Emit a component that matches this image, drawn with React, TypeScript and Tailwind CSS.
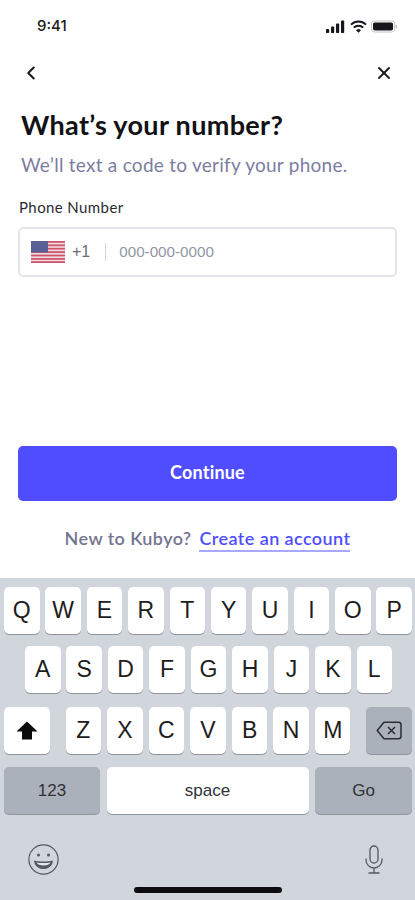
import { ChevronLeft, X } from 'lucide-react';

const ROW_ONE = ['Q', 'W', 'E', 'R', 'T', 'Y', 'U', 'I', 'O', 'P'];
const ROW_TWO = ['A', 'S', 'D', 'F', 'G', 'H', 'J', 'K', 'L'];
const ROW_THREE = ['Z', 'X', 'C', 'V', 'B', 'N', 'M'];

const Key = ({ label }: { label: string }) => (
  <div className="flex h-[47px] w-[35.5px] items-center justify-center rounded-[5px] bg-white text-[23px] text-[#1d1d20] shadow-[0_1px_0_#8f939a]">
    {label}
  </div>
);

const StatusIcons = () => (
  <div className="flex items-center gap-[4px]">
    <svg width="20" height="13" viewBox="0 0 20 13" fill="#16161c">
      <rect x="0" y="9" width="3.2" height="4" rx="0.8" />
      <rect x="5" y="6.5" width="3.2" height="6.5" rx="0.8" />
      <rect x="10" y="3.5" width="3.2" height="9.5" rx="0.8" />
      <rect x="15" y="0.5" width="3.2" height="12.5" rx="0.8" />
    </svg>
    <svg width="17" height="13" viewBox="0 0 17 13" fill="none" stroke="#16161c" strokeWidth="2">
      <path d="M1 4.6a10.6 10.6 0 0 1 15 0" />
      <path d="M3.8 7.6a6.6 6.6 0 0 1 9.4 0" />
      <path d="M8.5 12.4 6.4 10.2a3 3 0 0 1 4.2 0Z" fill="#16161c" strokeWidth="0.6" />
    </svg>
    <svg width="27" height="13" viewBox="0 0 27 13">
      <rect x="0.5" y="1" width="23" height="11" rx="3" fill="none" stroke="#c4c4c8" />
      <rect x="2" y="2.5" width="20" height="8" rx="1.8" fill="#16161c" />
      <rect x="24.5" y="4.7" width="1.5" height="3.6" rx="0.7" fill="#c4c4c8" />
    </svg>
  </div>
);

const UsFlag = () => (
  <svg width="34" height="22" viewBox="0 0 34 22">
    <rect width="34" height="22" fill="#f0dde1" />
    {[0, 3.4, 6.8, 10.2, 13.6, 17, 20.2].map((y) => (
      <rect key={y} x="0" y={y} width="34" height="1.8" fill="#d0566e" />
    ))}
    <rect width="17" height="11.5" fill="#5a5f96" />
  </svg>
);

const Shift = () => (
  <svg width="22" height="19" viewBox="0 0 22 19" fill="#0b0b0e">
    <path d="M11 0.5 21.5 10.5H16V18.5H6V10.5H0.5Z" />
  </svg>
);

const Backspace = () => (
  <svg width="26" height="19" viewBox="0 0 26 19" fill="none" stroke="#2b2d33" strokeWidth="1.5">
    <path d="M8 1.2h14.5a2.5 2.5 0 0 1 2.5 2.5v11.6a2.5 2.5 0 0 1-2.5 2.5H8L1.2 9.5Z" strokeLinejoin="round" />
    <path d="m12 6 7 7M19 6l-7 7" />
  </svg>
);

const Emoji = () => (
  <svg width="31" height="31" viewBox="0 0 31 31" fill="none" stroke="#55585f" strokeWidth="1.2">
    <circle cx="15.5" cy="15.5" r="14.6" />
    <circle cx="10.5" cy="11" r="1.5" fill="#55585f" stroke="none" />
    <circle cx="20.5" cy="11" r="1.5" fill="#55585f" stroke="none" />
    <path d="M6 16.5c5 1.4 14 1.400 19 0-.6 5.5-4.600 8.600-9.500 8.600S6.600 22 6 16.500Z" fill="#55585f" stroke="none" />
    <path d="M8.500 18.500c4 .8 10 .8 14 0-.8 1.800-3.500 3-7 3s-6.200-1.200-7-3Z" fill="#e4e6ea" stroke="none" />
  </svg>
);

const Mic = () => (
  <svg width="18" height="29" viewBox="0 0 18 29" fill="none" stroke="#55585f" strokeWidth="1.300">
    <rect x="5" y="1" width="8" height="17" rx="4" />
    <path d="M1 13.500v1.500a8 8 0 0 0 16 0v-1.500M9 23v4.500M3.500 28h11" />
  </svg>
);

export default function App() {
  return (
    <div className="flex h-[900px] w-[415px] flex-col overflow-hidden bg-white font-['Lato',sans-serif]">
      {/* Status bar */}
      <div className="flex h-[52px] items-center justify-between pr-[17px] pl-[37px]">
        <span className="font-['Inter',sans-serif] text-[15px] font-medium text-[#1b1b20]">9:41</span>
        <StatusIcons />
      </div>

      {/* Nav */}
      <div className="flex h-[42px] items-center justify-between pr-[21px] pl-[20px]">
        <ChevronLeft className="h-[22px] w-[22px] text-[#17171c]" strokeWidth={2.2} />
        <X className="h-[20px] w-[20px] text-[#17171c]" strokeWidth={2.2} />
      </div>

      <div className="px-[18px]">
        <h1 className="mt-[15px] ml-[3px] text-[27px] leading-[32px] font-bold tracking-[0.33px] text-[#111116]">
          What’s your number?
        </h1>
        <p className="mt-[12px] ml-[3px] text-[19px] leading-[24px] tracking-[0.26px] text-[#7b7d9f]">
          We’ll text a code to verify your phone.
        </p>
        <label className="mt-[20px] ml-[1px] block text-[15px] leading-[20px] tracking-[0.4px] text-[#2a2a33]">
          Phone Number
        </label>
        <div className="mt-[10px] flex h-[50px] items-center rounded-[5px] border-2 border-[#e4e5ea] bg-white pl-[11px]">
          <UsFlag />
          <span className="ml-[7px] font-['Liberation_Sans',sans-serif] text-[16px] text-[#6c6e78]">+1</span>
          <div className="ml-[15px] h-[18px] w-[1px] bg-[#d5d6dc]" />
          <span className="ml-[13px] font-['Liberation_Sans',sans-serif] text-[15.2px] text-[#9396a4]">000-000-0000</span>
        </div>
      </div>

      {/* Actions */}
      <div className="mt-[169px] px-[18px]">
        <button className="flex h-[55px] w-full items-center justify-center rounded-[5px] bg-[#4f4dff] pb-[2px] text-[18px] font-bold tracking-[0.2px] text-white">
          Continue
        </button>
        <div className="mt-[27px] flex justify-center gap-[8px] text-[18px] leading-[20px] font-semibold tracking-[0.42px]">
          <span className="text-[#73758f]">New to Kubyo?</span>
          <span className="border-b-2 border-[#a9a8ff] pb-[2px] text-[#4f4dff]">Create an account</span>
        </div>
      </div>

      {/* Keyboard */}
      <div className="mt-auto flex h-[322px] flex-col bg-[#d1d5dc] pt-[9px] font-['Liberation_Sans',sans-serif]">
        <div className="flex justify-between pr-[3px] pl-[4px]">
          {ROW_ONE.map((k) => (
            <Key key={k} label={k} />
          ))}
        </div>
        <div className="mt-[12px] flex justify-between pr-[23px] pl-[25px]">
          {ROW_TWO.map((k) => (
            <Key key={k} label={k} />
          ))}
        </div>
        <div className="mt-[14px] flex justify-between pr-[3px] pl-[4px]">
          <div className="flex h-[47px] w-[46px] items-center justify-center rounded-[5px] bg-white shadow-[0_1px_0_#8f939a]">
            <Shift />
          </div>
          <div className="flex w-[285px] justify-between">
            {ROW_THREE.map((k) => (
              <Key key={k} label={k} />
            ))}
          </div>
          <div className="flex h-[47px] w-[46px] items-center justify-center rounded-[5px] bg-[#abb1bb] shadow-[0_1px_0_#8f939a]">
            <Backspace />
          </div>
        </div>
        <div className="mt-[13px] flex justify-between pr-[3px] pl-[4px] text-[17px] text-[#2f3138]">
          <div className="flex h-[47px] w-[96px] items-center justify-center rounded-[5px] bg-[#abb1bb] shadow-[0_1px_0_#8f939a]">
            123
          </div>
          <div className="flex h-[47px] w-[202px] items-center justify-center rounded-[5px] bg-white shadow-[0_1px_0_#8f939a]">
            space
          </div>
          <div className="flex h-[47px] w-[97px] items-center justify-center rounded-[5px] bg-[#abb1bb] shadow-[0_1px_0_#8f939a]">
            Go
          </div>
        </div>
        <div className="mt-[30px] flex items-center justify-between pr-[32px] pl-[28px]">
          <Emoji />
          <Mic />
        </div>
        <div className="mx-auto mt-[12px] h-[6px] w-[148px] rounded-full bg-[#0c0c10]" />
      </div>
    </div>
  );
}
